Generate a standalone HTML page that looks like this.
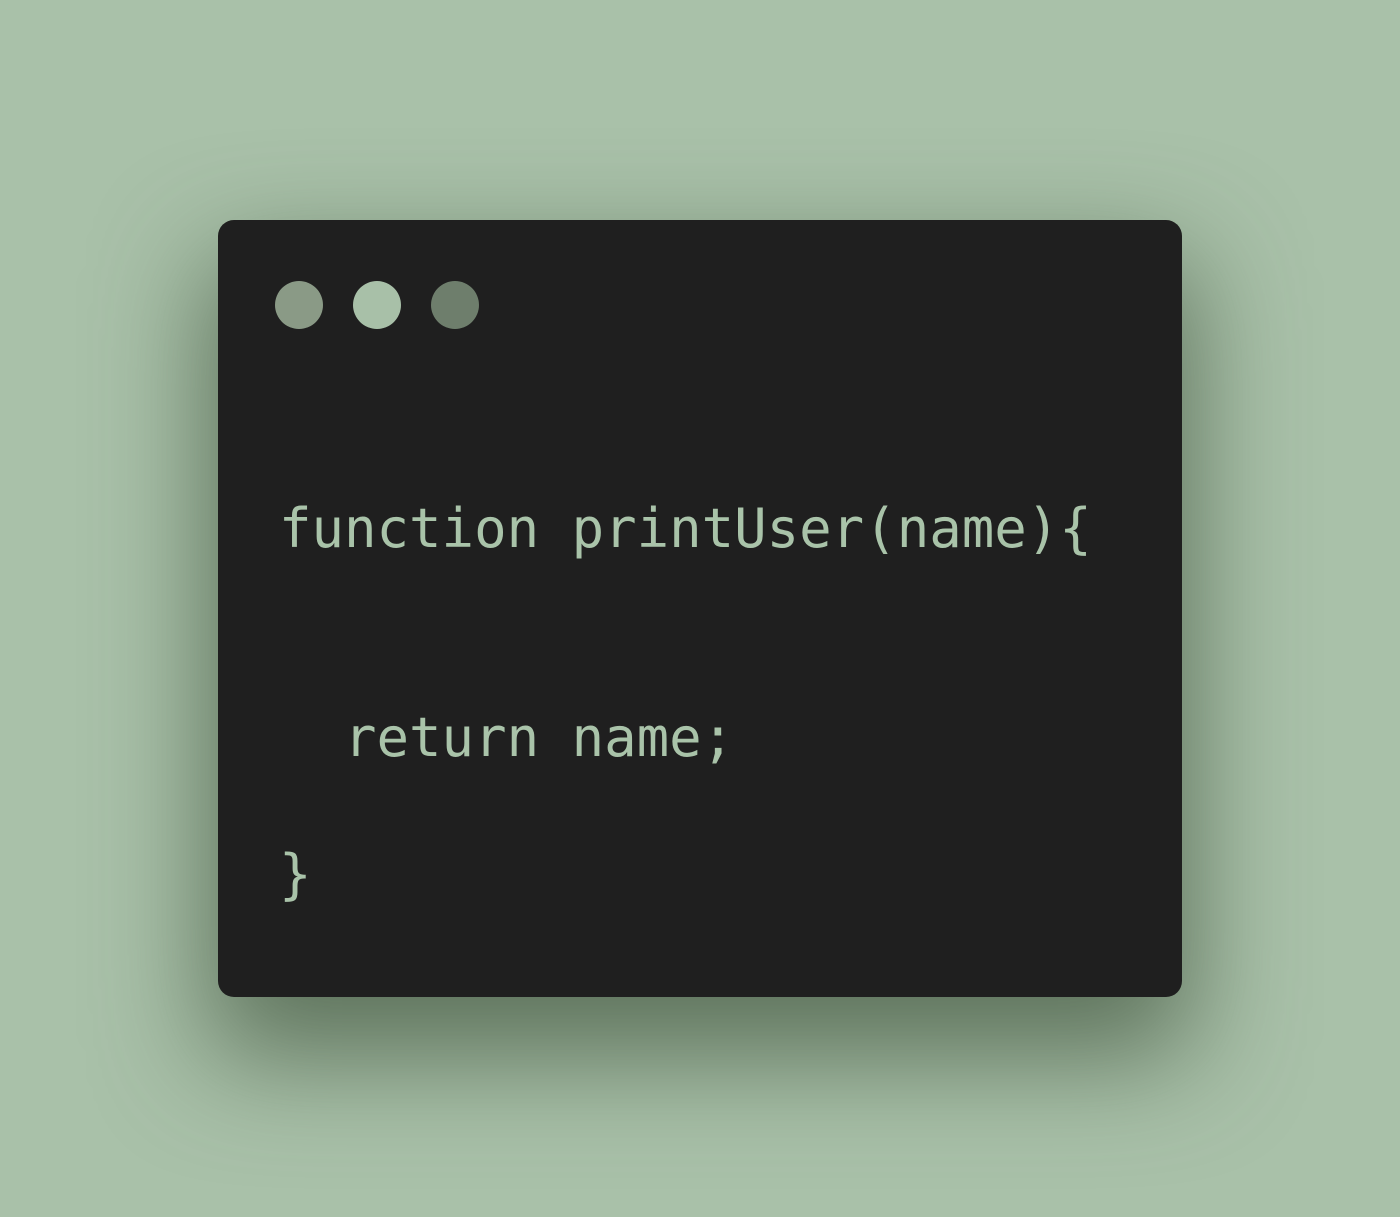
<!DOCTYPE html>
<html><head><style>
html,body{margin:0;padding:0;}
body{width:1400px;height:1217px;background:#a9c1a9;position:relative;overflow:hidden;}
.card{position:absolute;left:218px;top:220px;width:964px;height:777px;background:#1f1f1f;border-radius:16px;box-shadow:0 50px 110px 10px rgba(80,100,78,0.85);}
.dot{position:absolute;top:281px;width:48px;height:48px;border-radius:50%;}
.t{position:absolute;font-family:"DejaVu Sans Mono","Liberation Mono",monospace;font-size:54px;line-height:54px;color:#a9c3a9;white-space:pre;}
</style></head><body>
<div class="card"></div>
<div class="dot" style="left:275px;background:#8a9a86"></div>
<div class="dot" style="left:353px;background:#a8c0a8"></div>
<div class="dot" style="left:431px;background:#6e7e6c"></div>
<div class="t" style="left:279px;top:502px">function printUser(name){</div>
<div class="t" style="left:279px;top:711px">  return name;</div>
<div class="t" style="left:279px;top:848px">}</div>
</body></html>
